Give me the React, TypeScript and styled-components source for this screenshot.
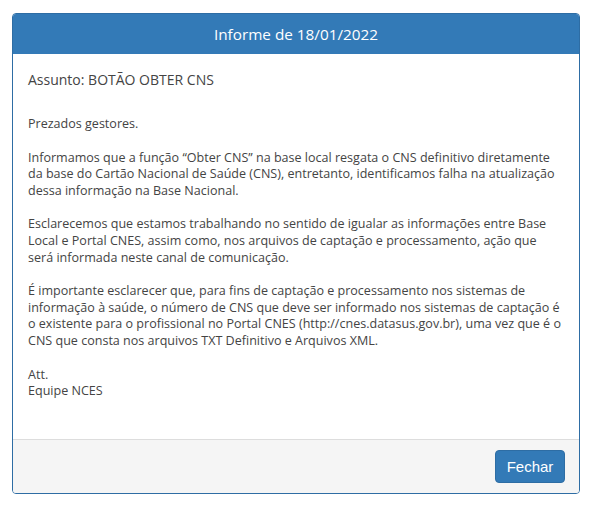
import React from "react";
import styled, { createGlobalStyle } from "styled-components";

const Global = createGlobalStyle`
  html, body { margin: 0; padding: 0; background: #fff; }
  body { font-family: "Open Sans", "Liberation Sans", sans-serif; }
`;

const Page = styled.div`
  padding: 13px 11px 0 12px;
`;

const Panel = styled.section`
  width: 568px;
  box-sizing: border-box;
  border: 1px solid #2e6da4;
  border-radius: 4px;
  overflow: hidden;
  background: #fff;
`;

const Header = styled.header`
  height: 40px;
  background: #337ab7;
  color: #fff;
  display: flex;
  align-items: center;
  justify-content: center;
  font-size: 15.3px;
`;

const Body = styled.div`
  padding: 17px 15px 39px 15px;
  color: #444;
  font-size: 12.55px;
  line-height: 16.6px;
  white-space: nowrap;
`;

const Subject = styled.div`
  font-size: 14px;
  line-height: 18px;
  margin-bottom: 27px;
`;

const Para = styled.p`
  margin: 0 0 17px 0;
  &:last-child { margin-bottom: 0; }
`;

const Footer = styled.footer`
  background: #f5f5f5;
  border-top: 1px solid #ddd;
  padding: 10px 14px 10px 15px;
  display: flex;
  justify-content: flex-end;
`;

const Button = styled.button`
  background: #337ab7;
  border: 1px solid #2e6da4;
  border-radius: 4px;
  color: #fff;
  font-family: "Liberation Sans", Arial, sans-serif;
  font-size: 15px;
  height: 33px;
  width: 70px;
  padding: 0;
  cursor: pointer;
`;

export default function App() {
  return (
    <>
      <Global />
      <Page>
        <Panel>
          <Header>Informe de 18/01/2022</Header>
          <Body>
            <Subject>Assunto: BOTÃO OBTER CNS</Subject>
            <Para>Prezados gestores.</Para>
            <Para>
              Informamos que a função “Obter CNS” na base local resgata o CNS definitivo diretamente
              <br />
              da base do Cartão Nacional de Saúde (CNS), entretanto, identificamos falha na atualização
              <br />
              dessa informação na Base Nacional.
            </Para>
            <Para>
              Esclarecemos que estamos trabalhando no sentido de igualar as informações entre Base
              <br />
              Local e Portal CNES, assim como, nos arquivos de captação e processamento, ação que
              <br />
              será informada neste canal de comunicação.
            </Para>
            <Para>
              É importante esclarecer que, para fins de captação e processamento nos sistemas de
              <br />
              informação à saúde, o número de CNS que deve ser informado nos sistemas de captação é
              <br />
              o existente para o profissional no Portal CNES (http://cnes.datasus.gov.br), uma vez que é o
              <br />
              CNS que consta nos arquivos TXT Definitivo e Arquivos XML.
            </Para>
            <Para>
              Att.
              <br />
              Equipe NCES
            </Para>
          </Body>
          <Footer>
            <Button>Fechar</Button>
          </Footer>
        </Panel>
      </Page>
    </>
  );
}
